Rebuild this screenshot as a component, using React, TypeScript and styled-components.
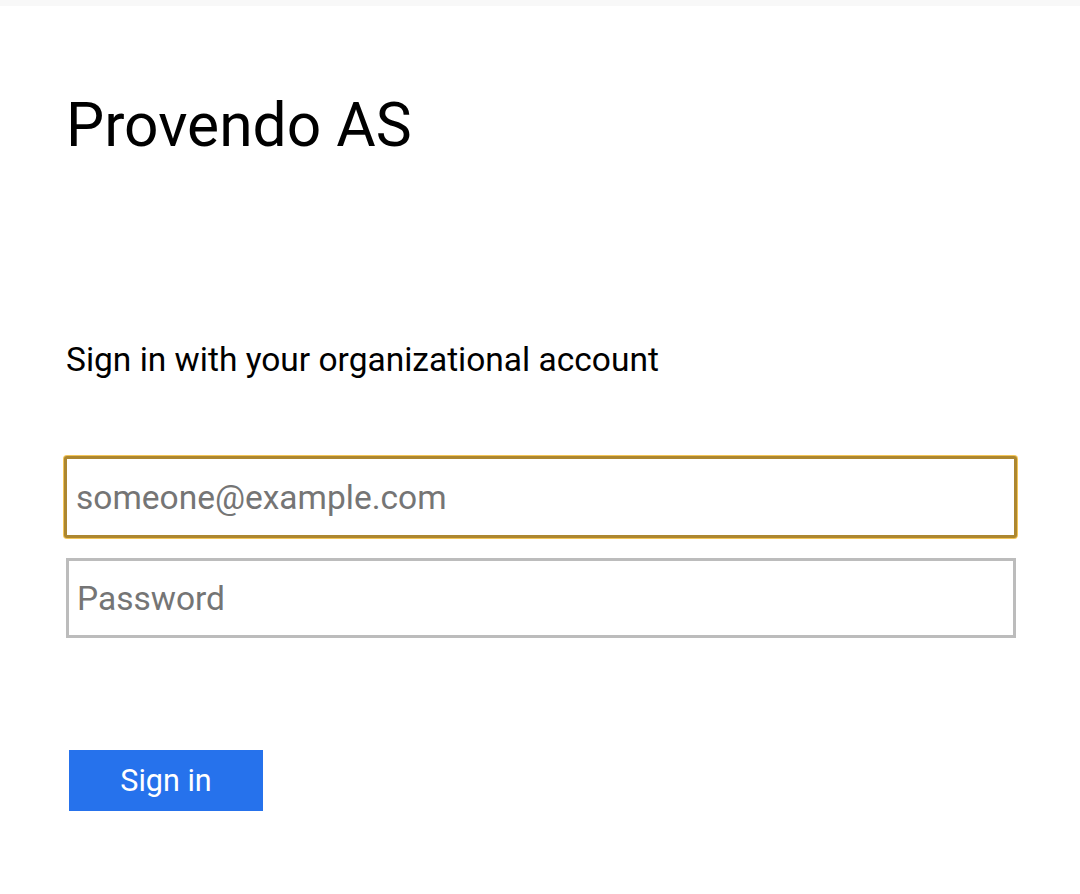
import React from "react";
import styled, { createGlobalStyle } from "styled-components";

const Global = createGlobalStyle`
  html, body { margin: 0; padding: 0; background: #ffffff; }
  body { font-family: Roboto, "Noto Sans", Arial, sans-serif; color: #000; }
  * { box-sizing: border-box; }
`;

const Page = styled.div`
  width: 1080px;
  min-height: 894px;
  background: #ffffff;
  border-top: 6px solid #f8f8f8;
`;

const Content = styled.main`
  display: flex;
  flex-direction: column;
  padding: 83px 64px 0 66px;
`;

const Title = styled.h1`
  margin: 0;
  font-family: Roboto, sans-serif;
  font-weight: 400;
  font-size: 60.5px;
  line-height: 74px;
  color: #000;
`;

const Subtitle = styled.p`
  margin: 179px 0 0 0;
  font-family: Roboto, sans-serif;
  font-size: 33.5px;
  line-height: 36px;
  color: #000;
`;

const Form = styled.form`
  display: flex;
  flex-direction: column;
  margin-top: 78px;
  width: 951px;
`;

const Field = styled.input<{ $focused?: boolean }>`
  display: block;
  height: ${(p) => (p.$focused ? "82px" : "80px")};
  width: ${(p) => (p.$focused ? "953px" : "950px")};
  margin: ${(p) => (p.$focused ? "0 0 0 -2px" : "20px 0 0 0")};
  padding: ${(p) => (p.$focused ? "0 9px" : "0 8px")};
  font-family: Roboto, sans-serif;
  font-size: 33.5px;
  color: #000;
  background: #fff;
  border: ${(p) => (p.$focused ? "3px solid #ad8730" : "3px solid #bcbcbc")};
  border-radius: ${(p) => (p.$focused ? "3px" : "0")};
  box-shadow: ${(p) => (p.$focused ? "0 0 0 1px #f3c558" : "none")};
  outline: none;
  &::placeholder { color: #757575; opacity: 1; }
`;

const SubmitButton = styled.button`
  margin: 112px 0 0 3px;
  width: 194px;
  height: 61px;
  border: none;
  border-radius: 0;
  background: #2672ec;
  color: #ffffff;
  font-family: Roboto, sans-serif;
  font-size: 30.5px;
  cursor: pointer;
  align-self: flex-start;
`;

export default function App() {
  return (
    <Page>
      <Global />
      <Content>
        <Title>Provendo AS</Title>
        <Subtitle>Sign in with your organizational account</Subtitle>
        <Form onSubmit={(e) => e.preventDefault()}>
          <Field $focused type="email" placeholder="someone@example.com" />
          <Field type="password" placeholder="Password" />
          <SubmitButton type="submit">Sign in</SubmitButton>
        </Form>
      </Content>
    </Page>
  );
}
